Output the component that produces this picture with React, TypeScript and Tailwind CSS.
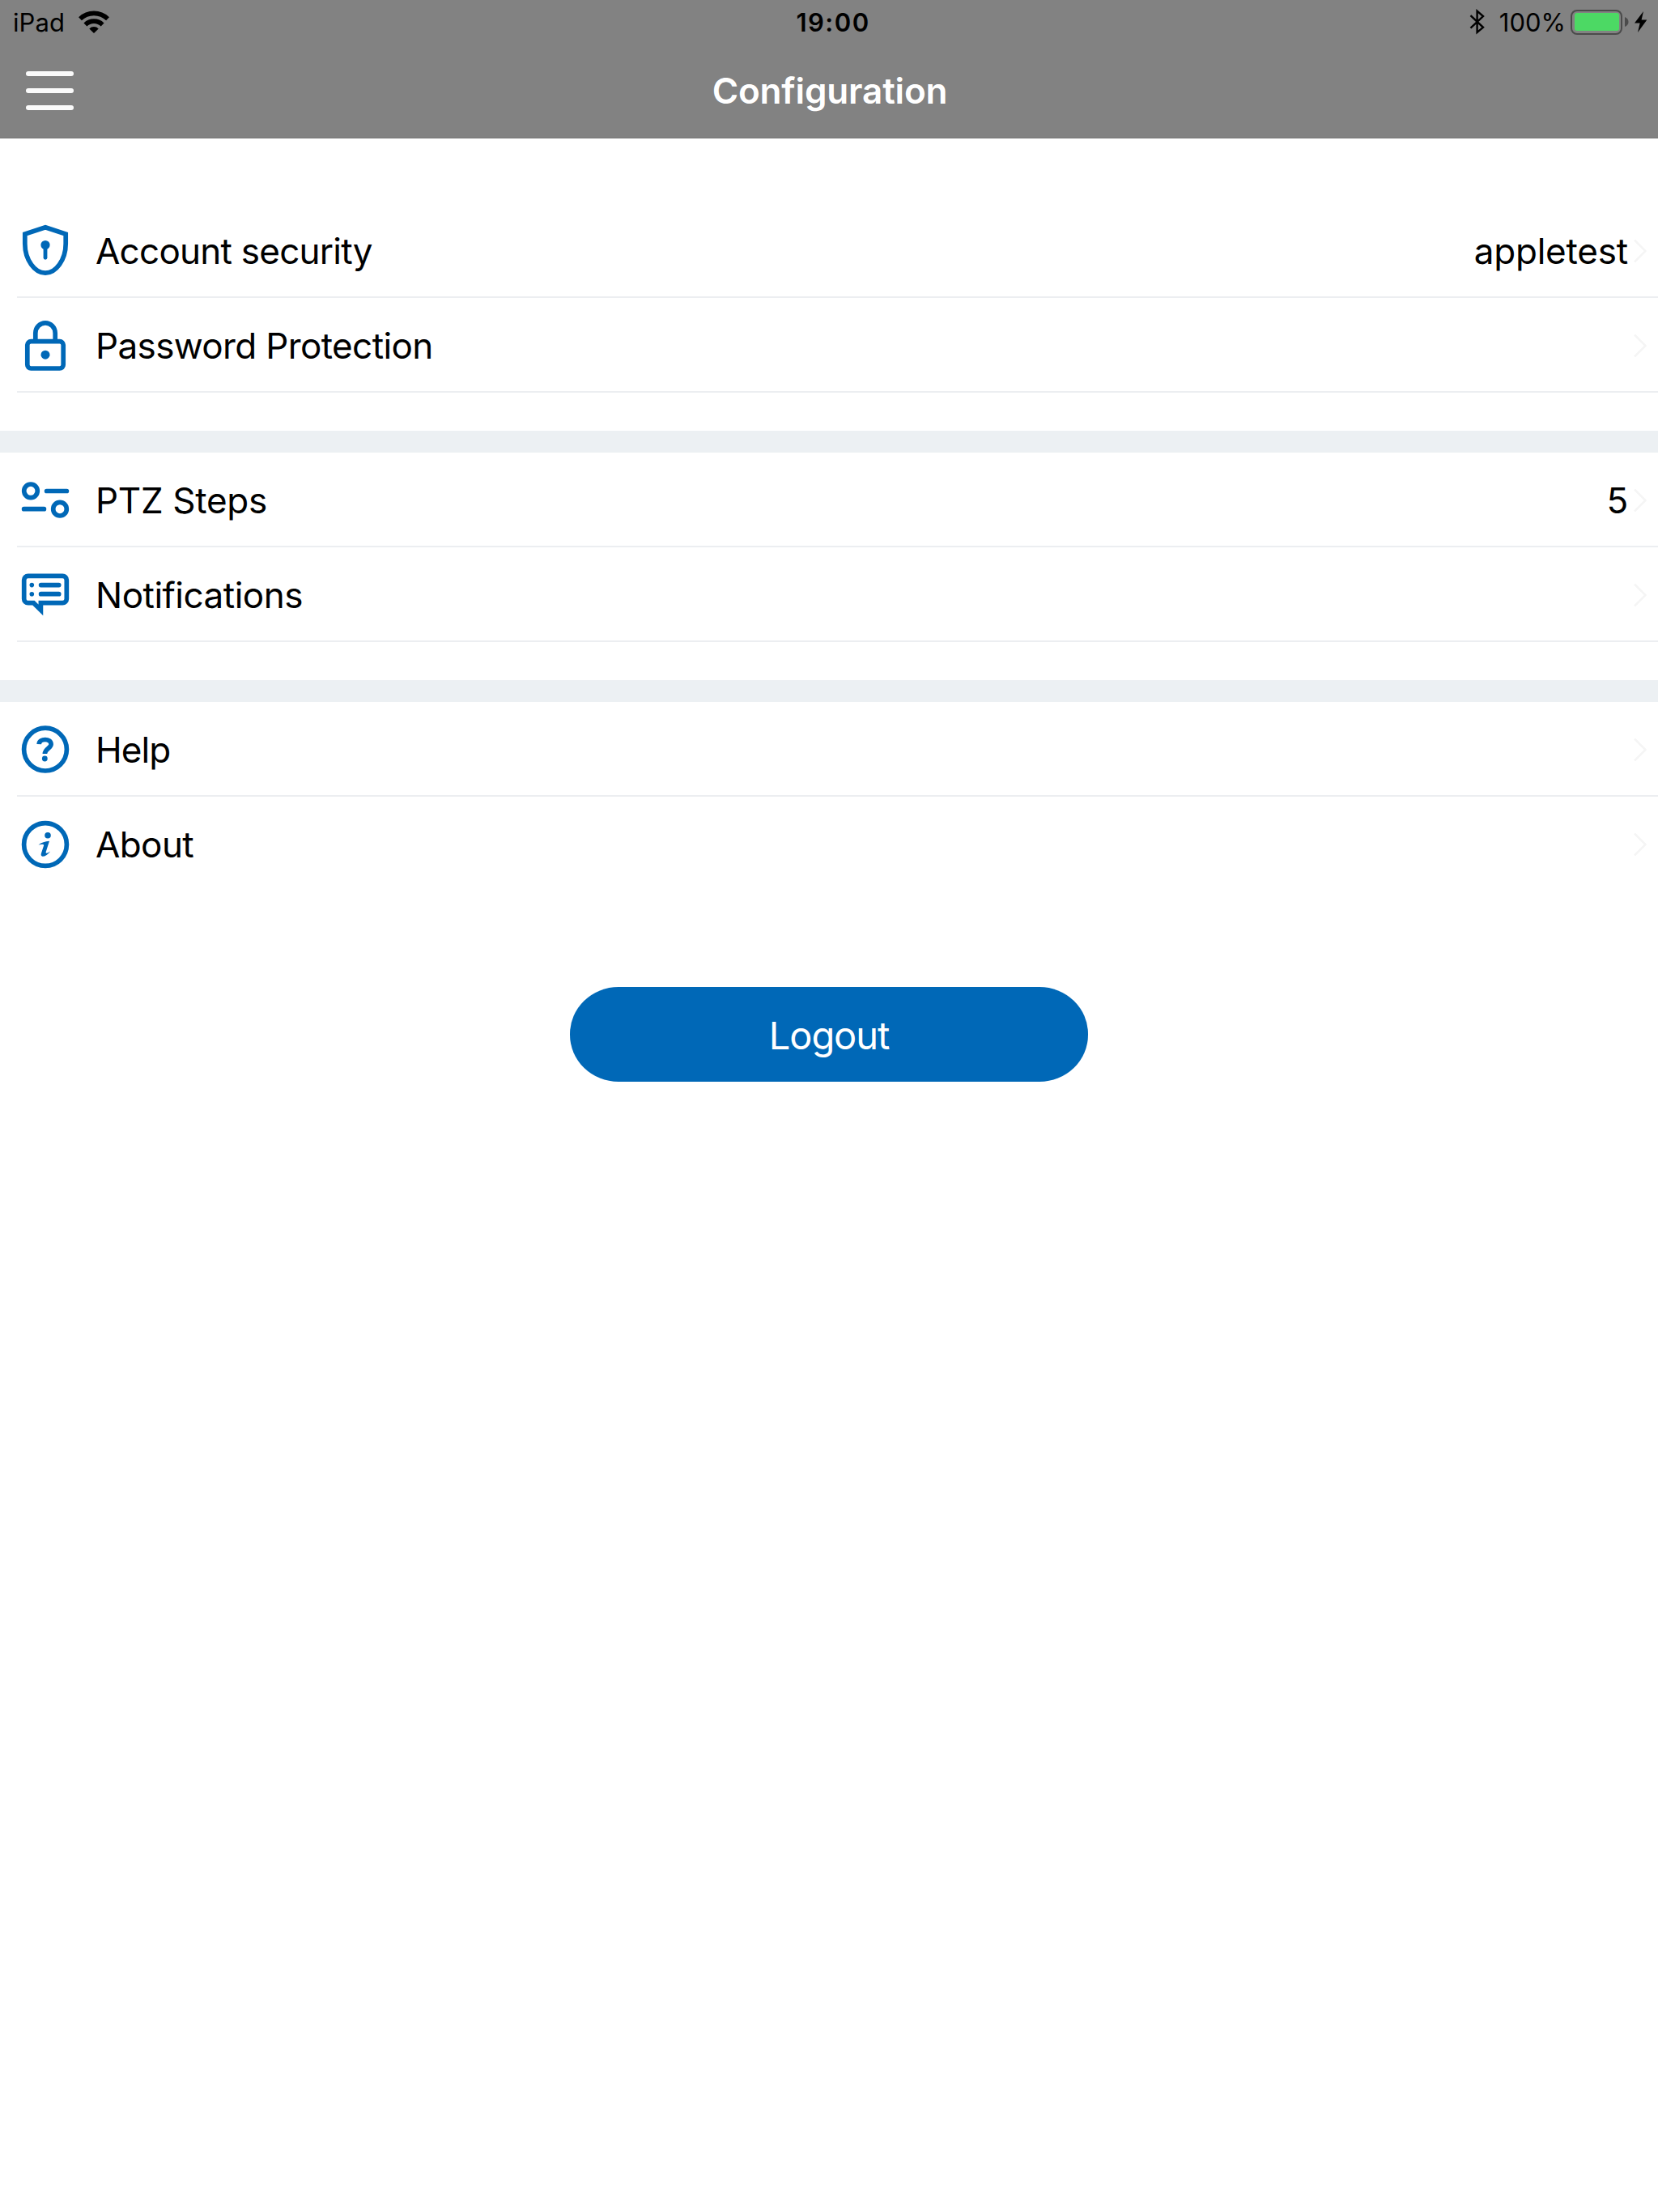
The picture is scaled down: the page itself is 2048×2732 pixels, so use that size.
import type { ReactNode } from "react";

interface RowProps {
  icon: ReactNode;
  label: string;
  labelClass: string;
  value?: string;
  last?: boolean;
}

function RowIcon({ children }: { children: ReactNode }) {
  return (
    <svg
      viewBox="0 0 60 67"
      className="w-[60px] h-[67px] shrink-0"
      fill="none"
      stroke="#0068b7"
      strokeWidth="5.7"
    >
      {children}
    </svg>
  );
}

const shieldIcon = (
  <RowIcon>
    <path d="M30 5.7 55.2 14V26C55.2 46 43 62.2 30 62.2S4.8 46 4.8 26V14Z" />
    <circle cx="30" cy="27.5" r="5.6" fill="#0068b7" stroke="none" />
    <path d="M30 28V43.3" strokeWidth="4.8" strokeLinecap="round" />
  </RowIcon>
);

const lockIcon = (
  <RowIcon>
    <rect x="7.8" y="29.6" width="44.4" height="33.4" rx="4.5" />
    <path d="M17.8 29V19.5a12.2 12.6 0 0 1 24.4 0V29" />
    <circle cx="30" cy="46.2" r="5.5" fill="#0068b7" stroke="none" />
  </RowIcon>
);

const stepsIcon = (
  <RowIcon>
    <circle cx="12" cy="23.3" r="8.3" />
    <circle cx="48" cy="45.7" r="8.3" />
    <path d="M31.6 23.5H56.4M3.6 45.7H28.4" strokeLinecap="round" />
  </RowIcon>
);

const noticeIcon = (
  <RowIcon>
    <path d="M24.4 44.7H51.3a5 5 0 0 0 5-5V16.4a5 5 0 0 0-5-5H8.7a5 5 0 0 0-5 5V39.7a5 5 0 0 0 5 5H15.5L24.4 53.5Z" />
    <circle cx="13.3" cy="22.6" r="2.8" fill="#0068b7" stroke="none" />
    <circle cx="13.3" cy="33.7" r="2.8" fill="#0068b7" stroke="none" />
    <path d="M24.6 22.6H46.7M24.6 33.7H46.7" strokeLinecap="round" />
  </RowIcon>
);

const helpIcon = (
  <RowIcon>
    <circle cx="30" cy="34.6" r="26.4" />
    <path d="M22.2 28.2C22.4 20.8 37.1 20.4 37.1 28.2C37.1 33 29.4 33.6 29.4 40" />
    <circle cx="29.3" cy="46" r="3.4" fill="#0068b7" stroke="none" />
  </RowIcon>
);

const aboutIcon = (
  <RowIcon>
    <circle cx="30" cy="35" r="26.4" />
    <g fill="#0068b7" stroke="none">
      <circle cx="33" cy="23.7" r="3.8" />
      <path d="M21.5 35.6Q27 31 35 30.7L30.6 44.6Q30.2 47.3 36.2 43.4Q31 50 26.5 49.8Q24 49.3 24.9 46L28.2 36Q28 33.6 21.5 35.6Z" />
    </g>
  </RowIcon>
);

function Row({ icon, label, labelClass, value, last }: RowProps) {
  return (
    <div
      className={`flex h-[117px] ml-[21px] pl-[5px] pr-[14px] items-center border-b-2 text-[44px] leading-none ${
        last ? "border-transparent" : "border-[#eceef1]"
      }`}
    >
      {icon}
      <span className={`ml-8 pt-0.5 ${labelClass}`}>{label}</span>
      {value && <span className="ml-auto pt-0.5 tracking-[-0.2px]">{value}</span>}
      <svg
        viewBox="0 0 16 30"
        className={`mt-0.5 w-4 h-[30px] ${value ? "ml-[7px]" : "ml-auto"}`}
        fill="none"
        stroke="#f5f5f5"
        strokeWidth="2.6"
      >
        <path d="M1 1.5 14.5 15 1 28.5" />
      </svg>
    </div>
  );
}

function StatusBar() {
  return (
    <div className="grid grid-cols-3 items-center h-[54px] text-[31px] leading-none text-black">
      <div className="flex items-center pl-4">
        <span className="tracking-[0.1px]">iPad</span>
        <svg viewBox="0 0 38 28" className="w-[38px] h-7 ml-[17px]" fill="none" stroke="#000" strokeWidth="5.6">
          <path d="M2 10.2A24.5 24.5 0 0 1 36 10.2" />
          <path d="M8.4 17.4A15.2 15.2 0 0 1 29.6 17.4" />
          <path d="M13.3 22.4A8 8 0 0 1 24.7 22.4L19 28Z" fill="#000" stroke="none" />
        </svg>
      </div>
      <span className="pl-[10px] text-center font-semibold tracking-[1.5px]">19:00</span>
      <div className="flex items-center justify-end pr-[13px]">
        <svg viewBox="0 0 20 32" className="w-5 h-8 mr-[17px]" fill="none" stroke="#000" strokeWidth="2.4">
          <path d="M1.5 8.2 17 22.8 9.6 29V2.6L17 9 1.5 23.6" />
        </svg>
        <span>100%</span>
        <div className="ml-1.5 flex h-[31px] w-[64px] rounded-[8px] border-[2.5px] border-[#4b4b4b] p-[2.5px]">
          <div className="flex-1 rounded-[3px] bg-[#4cd964]" />
        </div>
        <svg viewBox="0 0 5 12" className="ml-[3px] w-[5px] h-3">
          <path d="M0 0Q4.5 2 4.5 6T0 12Z" fill="#4b4b4b" />
        </svg>
        <svg viewBox="0 0 16 26" className="ml-[7px] w-4 h-[26px]">
          <path d="M11 0 0 14.5H6.7L4 26 15.3 10.5H8.6Z" fill="#000" />
        </svg>
      </div>
    </div>
  );
}

function NavBar() {
  return (
    <div className="grid grid-cols-3 h-[116px] items-center">
      <div className="flex flex-col gap-[15px] pl-8">
        <span className="w-[59px] h-1.5 rounded-full bg-[#fafafa]" />
        <span className="w-[59px] h-1.5 rounded-full bg-[#fafafa]" />
        <span className="w-[59px] h-1.5 rounded-full bg-[#fafafa]" />
      </div>
      <h1 className="pl-0.5 text-center text-[44px] leading-none font-semibold tracking-[-0.15px] text-white whitespace-nowrap">
        Configuration
      </h1>
    </div>
  );
}

export default function App() {
  return (
    <div className="w-[2048px] h-[2732px] bg-white font-['Inter',sans-serif] text-black">
      <header className="h-[171px] bg-[#828282] border-b border-[#757575]">
        <StatusBar />
        <NavBar />
      </header>
      <main>
        <section className="pt-20 pb-[47px]">
          <Row icon={shieldIcon} label="Account security" labelClass="tracking-[-0.75px]" value="appletest" />
          <Row icon={lockIcon} label="Password Protection" labelClass="tracking-[-0.63px]" />
        </section>
        <section className="border-t-[27px] border-[#ecf0f3] pb-[47px]">
          <Row icon={stepsIcon} label="PTZ Steps" labelClass="tracking-[-0.3px]" value="5" />
          <Row icon={noticeIcon} label="Notifications" labelClass="tracking-[-0.5px]" />
        </section>
        <section className="border-t-[27px] border-[#ecf0f3]">
          <Row icon={helpIcon} label="Help" labelClass="tracking-[-0.9px]" />
          <Row icon={aboutIcon} label="About" labelClass="tracking-[-0.6px]" last />
        </section>
        <button className="block mx-auto mt-[118px] w-[640px] h-[117px] rounded-[60px/58px] bg-[#0068b7] pt-0.5 text-[47px] leading-none tracking-[-1.1px] text-white">
          Logout
        </button>
      </main>
    </div>
  );
}
